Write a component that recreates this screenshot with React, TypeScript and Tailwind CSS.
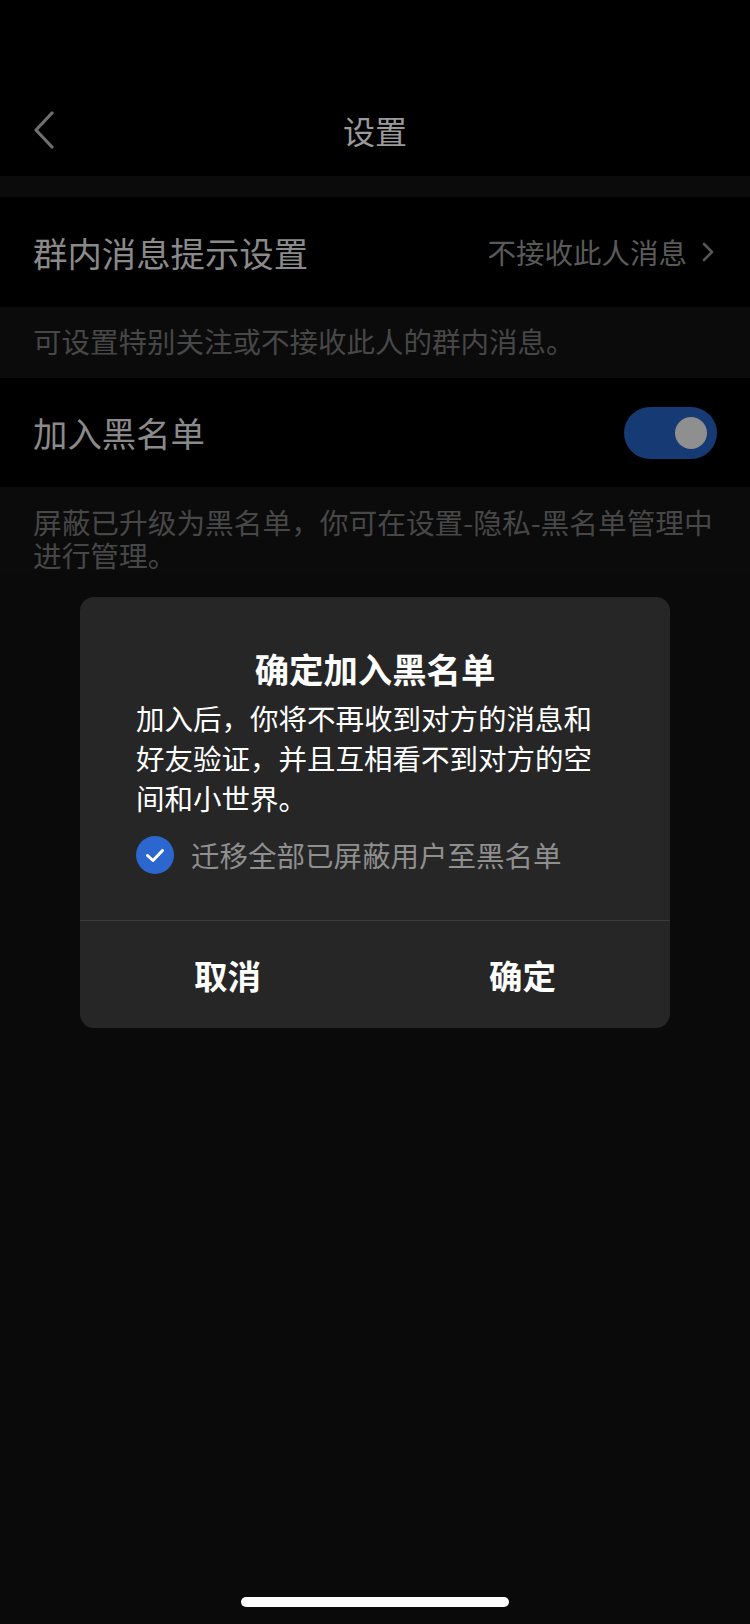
import React from "react";

const font = { fontFamily: '"Noto Sans CJK SC", "Noto Sans", sans-serif' };

export default function App() {
  return (
    <div
      className="relative w-[750px] h-[1624px] bg-[#0a0a0a] overflow-hidden"
      style={font}
    >
      {/* status + nav */}
      <div className="h-[84px] bg-black" />
      <div className="h-[92px] bg-black flex items-center relative">
        <div className="pl-[33px]">
          <svg width="22" height="38" viewBox="0 0 22 38" fill="none">
            <path d="M19 2 L3 19 L19 36" stroke="#6f6f6f" strokeWidth="3.2" strokeLinecap="round" strokeLinejoin="round" />
          </svg>
        </div>
        <div className="absolute inset-0 flex items-center justify-center text-[32px] text-[#9a9a9a] leading-none">
          设置
        </div>
      </div>
      <div className="h-[21px] bg-[#0b0b0b]" />

      {/* row 1 */}
      <div className="h-[110px] bg-black flex items-center justify-between pl-[33px] pr-[35px]">
        <span className="text-[34.4px] text-[#8a8a8a] leading-none">群内消息提示设置</span>
        <div className="flex items-center gap-[14px]">
          <span className="text-[28.5px] text-[#5a5a5a] leading-none">不接收此人消息</span>
          <svg width="14" height="20" viewBox="0 0 14 20" fill="none">
            <path d="M3 2 L11 10 L3 18" stroke="#555555" strokeWidth="2.6" strokeLinecap="round" strokeLinejoin="round" />
          </svg>
        </div>
      </div>
      <div className="h-[71px] bg-[#0b0b0b] flex items-center pl-[33px] pb-[3px]">
        <span className="text-[28.5px] text-[#474747] leading-none">可设置特别关注或不接收此人的群内消息。</span>
      </div>

      {/* row 2 */}
      <div className="h-[109px] bg-black flex items-center justify-between pl-[33px] pr-[33px]">
        <span className="text-[34.4px] text-[#8a8a8a] leading-none">加入黑名单</span>
        <div className="w-[93px] h-[52px] rounded-full bg-[#163a73] flex items-center justify-end pr-[10px]">
          <div className="w-[32px] h-[32px] rounded-full bg-[#8f8f8f]" />
        </div>
      </div>
      <div className="bg-[#0b0b0b] pl-[33px] pr-[20px] pt-[18px] text-[28.7px] leading-[33px] text-[#474747]">
        屏蔽已升级为黑名单，你可在设置-隐私-黑名单管理中进行管理。
      </div>

      {/* modal */}
      <div className="absolute top-[597px] left-[80px] w-[590px] h-[431px] bg-[#262626] rounded-[14px] flex flex-col">
        <div className="pt-[49px] text-center text-[34.4px] leading-[44px] font-bold text-white">
          确定加入黑名单
        </div>
        <div className="pl-[56px] pr-[66px] mt-[8px] text-[28.5px] leading-[40px] text-white">
          加入后，你将不再收到对方的消息和好友验证，并且互相看不到对方的空间和小世界。
        </div>
        <div className="pl-[56px] mt-[18px] flex items-center gap-[17px] h-[38px]">
          <div className="w-[38px] h-[38px] rounded-full bg-[#2c66cf] flex items-center justify-center">
            <svg width="24" height="24" viewBox="0 0 24 24" fill="none">
              <path d="M4.5 12.5 L10 17.5 L19.5 7.5" stroke="white" strokeWidth="3" strokeLinecap="round" strokeLinejoin="round" />
            </svg>
          </div>
          <span className="text-[28.5px] leading-none text-[#8f8f8f]">迁移全部已屏蔽用户至黑名单</span>
        </div>
        <div className="mt-[46px] h-px bg-[#3a3a3a]" />
        <div className="flex-1 grid grid-cols-2">
          <div className="flex items-center justify-center text-[33.5px] font-bold text-white leading-none pt-[1px]">取消</div>
          <div className="flex items-center justify-center text-[33.5px] font-bold text-white leading-none pt-[1px]">确定</div>
        </div>
      </div>

      {/* home indicator */}
      <div className="absolute top-[1597px] left-[241px] w-[268px] h-[10px] rounded-full bg-white" />
    </div>
  );
}
